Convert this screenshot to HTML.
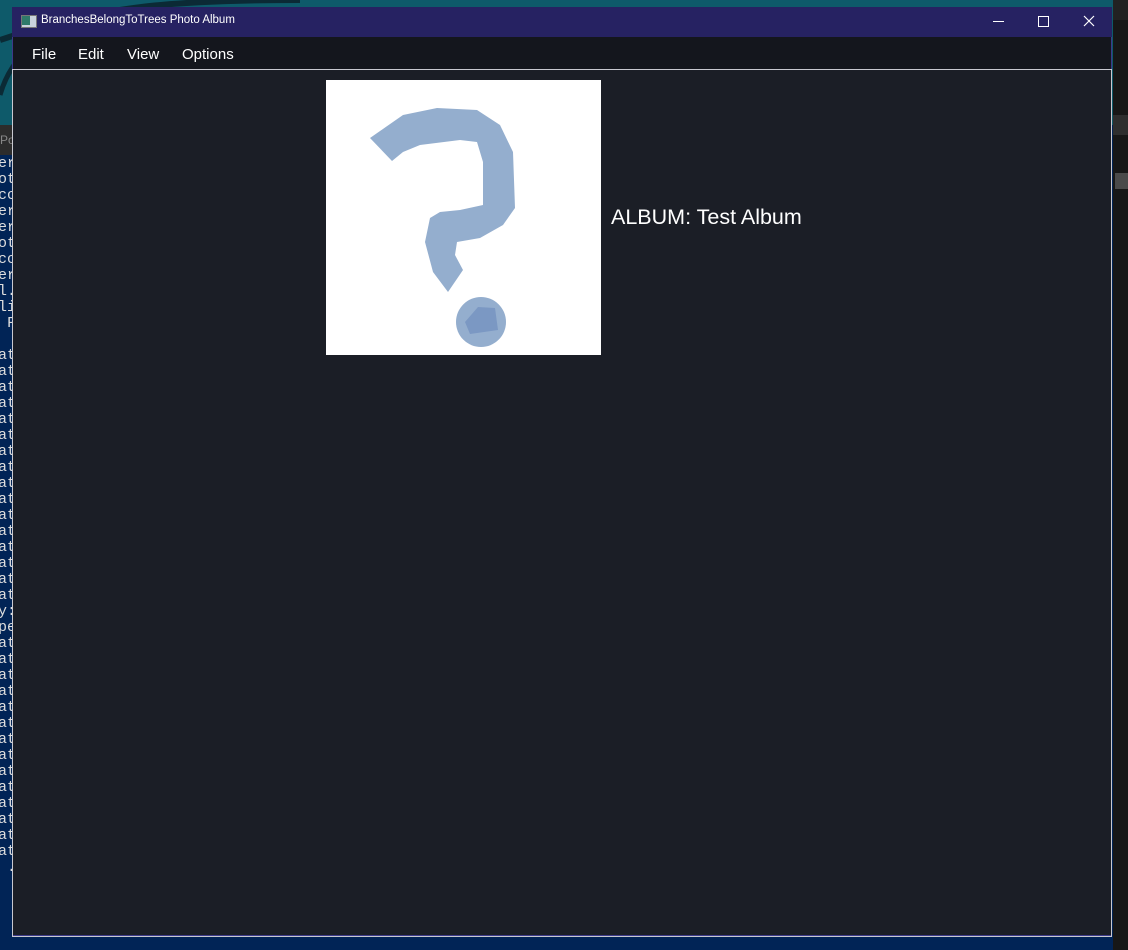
<!DOCTYPE html>
<html><head><meta charset="utf-8"><style>
html,body{margin:0;padding:0;width:1128px;height:950px;overflow:hidden;background:#012456;position:relative;font-family:"Liberation Sans",sans-serif}
.abs{position:absolute}
</style></head><body>
<div class="abs" style="left:0;top:0;width:1128px;height:125px;background:#0e5a6a"></div>
<svg class="abs" style="left:0;top:0" width="1128" height="125"><path d="M0 40 Q60 20 120 10 T300 0" stroke="#0b2a35" stroke-width="6" fill="none"/><path d="M0 95 Q10 60 40 40" stroke="#0b2a35" stroke-width="5" fill="none"/></svg>
<div class="abs" style="left:0;top:125px;width:12px;height:30px;background:#2c2c2c;color:#888;font-size:12px;line-height:30px">Po</div>
<pre class="abs" style="left:-2px;top:156px;margin:0;width:14px;overflow:hidden;color:#ddd;font:15px/16px 'Liberation Mono',monospace">er
ot
cc
er
er
ot
cc
er
l.
li
 F

at
at
at
at
at
at
at
at
at
at
at
at
at
at
at
at
y:
pe
at
at
at
at
at
at
at
at
at
at
at
at
at
at
 .</pre>
<div class="abs" style="left:1113px;top:0;width:15px;height:950px;background:#171717"></div>
<div class="abs" style="left:1113px;top:0;width:15px;height:20px;background:#222"></div>
<div class="abs" style="left:1113px;top:115px;width:15px;height:20px;background:#2e2e2e"></div>
<div class="abs" style="left:1115px;top:173px;width:13px;height:16px;background:#4a4a4a"></div>
<div class="abs" style="left:12px;top:7px;width:1100px;height:929px;background:#1b1e26;border:1px solid #3d3a8a;box-sizing:border-box"></div>
<div class="abs" style="left:12px;top:7px;width:1100px;height:30px;background:#262262"></div>
<div class="abs" style="left:21px;top:15px;width:14px;height:11px;background:#c9d3dc;border:1px solid #777"><div style="width:8px;height:9px;background:#2f7a6a"></div></div>
<div class="abs" style="left:41px;top:14px;color:#fff;font-size:11.5px">BranchesBelongToTrees Photo Album</div>
<div class="abs" style="left:993px;top:21px;width:11px;height:1px;background:#fff"></div>
<div class="abs" style="left:1038px;top:16px;width:9px;height:9px;border:1px solid #fff"></div>
<svg class="abs" style="left:1083px;top:15px" width="12" height="12"><path d="M1 1L11 11M11 1L1 11" stroke="#fff" stroke-width="1.2"/></svg>
<div class="abs" style="left:13px;top:37px;width:1098px;height:32px;background:#14161d;color:#fff;font-size:15px">
<span class="abs" style="left:19px;top:9px">File</span><span class="abs" style="left:65px;top:9px">Edit</span><span class="abs" style="left:114px;top:9px">View</span><span class="abs" style="left:169px;top:9px">Options</span></div>
<div class="abs" style="left:12px;top:69px;width:1100px;height:868px;border:1px solid #c8c8d0;box-sizing:border-box"></div>
<svg class="abs" style="left:326px;top:80px" width="275" height="275" viewBox="326 80 275 275">
<rect x="326" y="80" width="275" height="275" fill="#fff"/>
<path fill="#94aece" d="M370 138L403 115L437 108L477 110L500 125L513 152L515 208L503 225L480 238L457 242L455 255L463 270L448 292L433 272L425 242L430 218L440 212L460 210L483 205L483 162L477 142L460 140L420 145L403 152L392 161Z"/>
<circle cx="481" cy="322" r="25" fill="#94aece"/>
<path fill="#7b98c3" d="M465 322L478 307L495 308L498 330L470 334Z"/>
</svg>
<div class="abs" style="left:611px;top:205px;color:#fff;font-size:21.5px">ALBUM: Test Album</div>
</body></html>
